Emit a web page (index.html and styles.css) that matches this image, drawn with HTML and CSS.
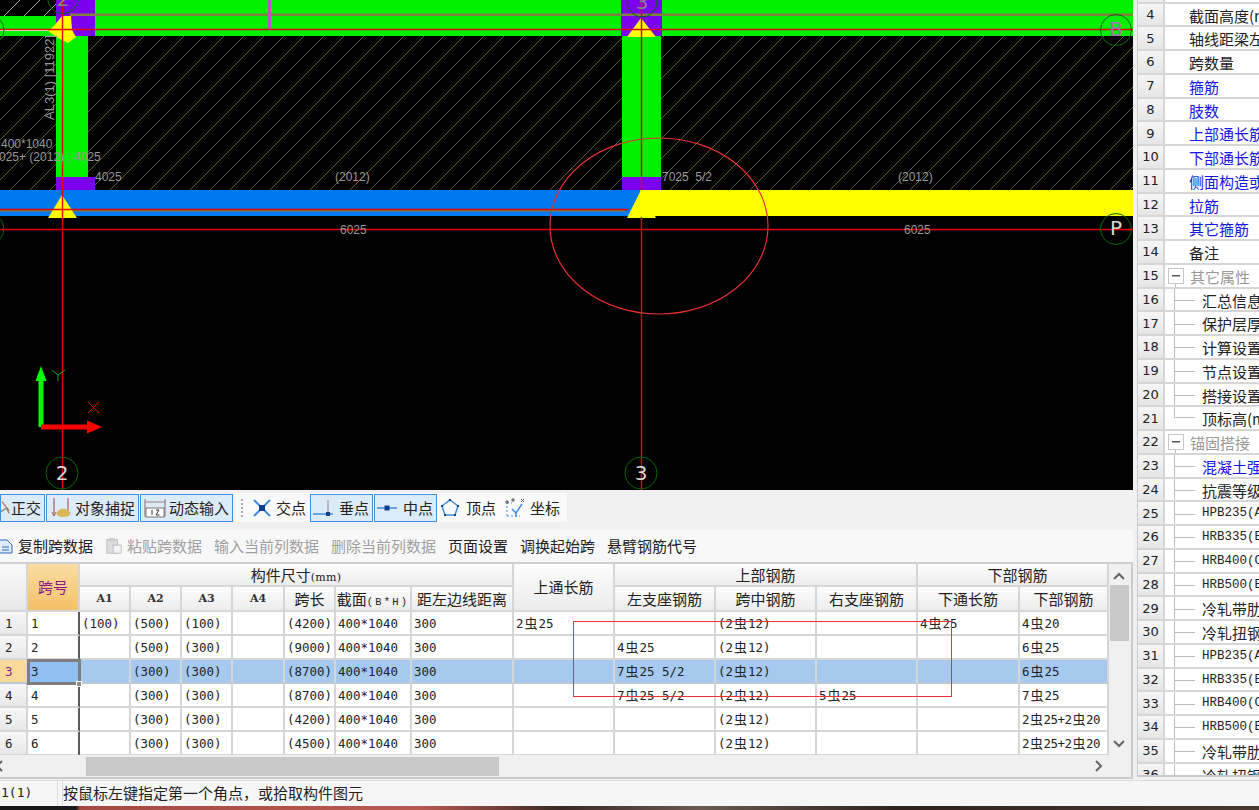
FILE: index.html
```html
<!DOCTYPE html>
<html lang="zh">
<head>
<meta charset="utf-8">
<title>梁平法表格</title>
<link rel="stylesheet" href="styles.css">
</head>
<body>
<div class="workspace">
  <div class="left">
    <div class="canvas">
      <svg class="drawing" width="1133" height="490" viewBox="0 0 1133 490">
        <defs>
          <pattern id="hatch" width="20" height="20" patternUnits="userSpaceOnUse"><path d="M-2 22L22 -2" stroke="#5c5c2c" stroke-width="1"/></pattern>
          <pattern id="hatchw" width="20" height="20" patternUnits="userSpaceOnUse"><path d="M-2 22L22 -2" stroke="#a8a8a8" stroke-width="1"/></pattern>
        </defs>
        <rect width="1133" height="490" fill="#000"/>
        <rect y="36" width="1133" height="154" fill="url(#hatch)"/>
        <rect width="56" height="16" fill="url(#hatchw)"/>
        <rect x="95" width="527" height="36" fill="#00f000"/>
        <rect x="660" width="473" height="36" fill="#00f000"/>
        <rect y="16" width="56" height="20" fill="#00f000"/>
        <rect x="56" y="36" width="32" height="141" fill="#00f000"/>
        <rect x="622" y="36" width="39" height="141" fill="#00f000"/>
        <rect x="56" width="39" height="36" fill="#7a00ee"/>
        <rect x="621" width="41" height="36" fill="#7a00ee"/>
        <rect x="56" y="177" width="39" height="13" fill="#7a00ee"/>
        <rect x="622" y="177" width="39" height="13" fill="#7a00ee"/>
        <rect y="190" width="640" height="26" fill="#0078f0"/>
        <rect x="640" y="190" width="493" height="26" fill="#ffff00"/>
        <rect x="70" y="13.5" width="1063" height="2.5" fill="#808040"/>
        <rect x="268" width="3" height="29" fill="#c050c0"/>
        <rect y="210" width="625" height="1.5" fill="#808040"/>
        <path d="M62 16L71 16L72 30L76 37L68 43L58 38L48 31L54 26Z" fill="#ffff00"/>
        <path d="M641 18L656 37L627 37Z" fill="#ffff00"/>
        <path d="M62 195L77 218L48 218Z" fill="#ffff00"/>
        <path d="M641 190L656 218L627 218Z" fill="#ffff00"/>
        <rect y="30" width="48" height="1" fill="#fff"/>
        <path d="M0 29.5H1133M0 229.5H1133M0 209.5H628M62.5 0V490M641.5 0V190M641.5 217V490" stroke="#e80000" stroke-width="1.4" fill="none"/>
        <ellipse cx="659" cy="226" rx="109" ry="88" fill="none" stroke="#e83030" stroke-width="1.2"/>
        <g fill="none" stroke="#006800">
          <circle cx="62" cy="473" r="16"/><circle cx="641" cy="473" r="16"/>
          <circle cx="1116" cy="30" r="15.5"/><circle cx="1116" cy="229" r="15.5"/>
          <circle cx="63" cy="-2" r="15.5"/><circle cx="642" cy="2" r="15"/>
          <circle cx="-11" cy="30" r="15"/><circle cx="-11" cy="229" r="15"/>
        </g>
        <g class="bubble">
          <text x="62" y="480">2</text><text x="641" y="480">3</text>
          <text class="bubble-b" x="1116" y="36">B</text><text x="1116" y="235">P</text>
          <text class="bubble-d" x="642" y="9">3</text><text class="bubble-d" x="63" y="6">2</text>
        </g>
        <g class="label">
          <text class="l-rot" transform="translate(54 120) rotate(-90)">AL3(1) [11922]</text>
          <text x="1" y="148">400*1040</text>
          <text x="-1" y="161">025+ (2012) ; 4025</text>
          <text x="95" y="181">4025</text>
          <text x="335" y="181">(2012)</text>
          <text x="340" y="234">6025</text>
          <text x="662" y="181">7025  5/2</text>
          <text x="898" y="181">(2012)</text>
          <text x="904" y="234">6025</text>
        </g>
        <path d="M41 427V378" stroke="#00ff00" stroke-width="5"/>
        <path d="M41 366L46.500 381H35.500Z" fill="#00ff00"/>
        <path d="M41 427H88" stroke="#ff0000" stroke-width="5"/>
        <path d="M102 427L87 420.500V433.500Z" fill="#ff0000"/>
        <path d="M52 370L58 375L65 370M58 375V381" stroke="#00b000" fill="none"/>
        <path d="M88 402L99 413M99 402L88 413" stroke="#d00000" fill="none"/>
      </svg>
    </div>

    <div class="snapbar">
      <div class="snap-btn on first">
        <svg width="11" height="18" viewBox="0 0 11 18"><path d="M1 2L9 12" stroke="#c87070" stroke-width="1.500"/><path d="M0 13L6 9L9 15" stroke="#888" stroke-width="1.500" fill="none"/></svg>
        <span>正交</span>
      </div>
      <div class="snap-btn on">
        <svg width="22" height="24" viewBox="0 0 22 24"><path d="M4 2V20M18 2V20" stroke="#b06060" stroke-width="1.200"/><path d="M2 16L4 20L6 16M16 16L18 20L20 16" stroke="#b06060" fill="none"/><path d="M8 15C11 11 19 13 20 17C20 21 12 22 8 20C6 18 6 17 8 15Z" fill="#d9b656"/></svg>
        <span>对象捕捉</span>
      </div>
      <div class="snap-btn on">
        <svg width="22" height="22" viewBox="0 0 22 22"><path d="M1 2V19H21V2M1 5H21" stroke="#a08080" stroke-width="1.200" fill="none"/><rect x="2" y="11" width="18" height="9" fill="#fff" stroke="#777"/><path d="M8 13V18M12 13H15L12 18H15.500" stroke="#333" fill="none"/></svg>
        <span>动态输入</span>
      </div>
      <div class="snap-group">
        <i class="grip"></i>
        <div class="snap-btn cross">
          <svg width="20" height="20" viewBox="0 0 20 20"><path d="M2 2L18 18M18 2L2 18" stroke="#3f8de0" stroke-width="2"/><rect x="7" y="7" width="6" height="6" fill="#123f8c"/></svg>
          <span>交点</span>
        </div>
        <div class="snap-btn on tight">
          <svg width="20" height="20" viewBox="0 0 20 20"><path d="M0 16H20" stroke="#3f8de0" stroke-width="1.500"/><path d="M15 2V16" stroke="#888"/><rect x="13" y="14" width="4" height="4" fill="#123f8c"/></svg>
          <span>垂点</span>
        </div>
        <div class="snap-btn on tight">
          <svg width="20" height="20" viewBox="0 0 20 20"><path d="M0 10H20" stroke="#3f8de0" stroke-width="1.500"/><rect x="7.500" y="7.500" width="5" height="5" fill="#123f8c"/></svg>
          <span>中点</span>
        </div>
        <div class="snap-btn vertex">
          <svg width="20" height="20" viewBox="0 0 20 20"><path d="M10 2L18 8L15 17H5L2 8Z" fill="none" stroke="#3f8de0" stroke-width="1.500"/><path d="M9 1h2v2H9zM1 7h2v2H1zM17 7h2v2h-2zM4 16h2v2H4zM14 16h2v2h-2z" fill="#123f8c"/></svg>
          <span>顶点</span>
        </div>
        <div class="snap-btn coord">
          <svg width="22" height="22" viewBox="0 0 22 22"><path d="M3 19V6M3 6H8M3 19H16" stroke="#3f8de0" stroke-dasharray="2 2" fill="none"/><path d="M8 12L12 16L18 7M12 16V20" stroke="#3f8de0" stroke-width="1.500" fill="none"/><path d="M2 4h2v2H2zM8 2h2v2H8zM17 2l3 3M20 2l-3 3" stroke="#555" fill="none"/></svg>
          <span>坐标</span>
        </div>
      </div>
    </div>

    <div class="datatools">
      <div class="tool first">
        <svg width="14" height="18" viewBox="0 0 14 18"><path d="M0 3H8L13 8V16H0Z" fill="#dfeafa" stroke="#2f6fb8"/><path d="M3 10H10M3 13H10" stroke="#2f6fb8"/></svg>
        <span>复制跨数据</span>
      </div>
      <div class="tool off paste">
        <svg width="18" height="18" viewBox="0 0 20 20"><rect x="2" y="3" width="12" height="15" fill="#ddd" stroke="#bbb"/><rect x="5" y="1" width="6" height="4" fill="#ccc"/><rect x="9" y="9" width="9" height="9" fill="#f4f4f4" stroke="#bbb"/></svg>
        <span>粘贴跨数据</span>
      </div>
      <div class="tool off">输入当前列数据</div>
      <div class="tool off">删除当前列数据</div>
      <div class="tool">页面设置</div>
      <div class="tool">调换起始跨</div>
      <div class="tool">悬臂钢筋代号</div>
    </div>

    <div class="gridpane">
      <div class="gridrow">
        <div class="gridclip">
          <table class="grid">
            <colgroup>
              <col class="c28"><col class="c52"><col class="c51"><col class="c51"><col class="c51"><col class="c52"><col class="c51"><col class="c76"><col class="c102"><col class="c101"><col class="c101"><col class="c101"><col class="c101"><col class="c102"><col class="c89">
            </colgroup>
            <thead>
              <tr>
                <th class="rh" rowspan="2"></th>
                <th class="span-h" rowspan="2">跨号</th>
                <th colspan="7">构件尺寸<span class="mm">(mm)</span></th>
                <th rowspan="2">上通长筋</th>
                <th colspan="3">上部钢筋</th>
                <th class="lower" colspan="2">下部钢筋</th>
              </tr>
              <tr>
                <th class="an">A1</th><th class="an">A2</th><th class="an">A3</th><th class="an">A4</th>
                <th>跨长</th><th>截面<span class="bh">(B*H)</span></th><th>距左边线距离</th>
                <th>左支座钢筋</th><th>跨中钢筋</th><th>右支座钢筋</th><th>下通长筋</th><th>下部钢筋</th>
              </tr>
            </thead>
            <tbody>
              <tr><td class="rh">1</td><td class="sn">1</td><td>(100)</td><td>(500)</td><td>(100)</td><td></td><td>(4200)</td><td>400*1040</td><td>300</td><td>2<b>虫</b>25</td><td></td><td>(2<b>虫</b>12)</td><td></td><td>4<b>虫</b>25</td><td>4<b>虫</b>20</td></tr>
              <tr><td class="rh">2</td><td class="sn">2</td><td></td><td>(500)</td><td>(300)</td><td></td><td>(9000)</td><td>400*1040</td><td>300</td><td></td><td>4<b>虫</b>25</td><td>(2<b>虫</b>12)</td><td></td><td></td><td>6<b>虫</b>25</td></tr>
              <tr class="sel"><td class="rh">3</td><td class="sn cur">3</td><td></td><td>(300)</td><td>(300)</td><td></td><td>(8700)</td><td>400*1040</td><td>300</td><td></td><td>7<b>虫</b>25 5/2</td><td>(2<b>虫</b>12)</td><td></td><td></td><td>6<b>虫</b>25</td></tr>
              <tr><td class="rh">4</td><td class="sn">4</td><td></td><td>(300)</td><td>(300)</td><td></td><td>(8700)</td><td>400*1040</td><td>300</td><td></td><td>7<b>虫</b>25 5/2</td><td>(2<b>虫</b>12)</td><td>5<b>虫</b>25</td><td></td><td>7<b>虫</b>25</td></tr>
              <tr><td class="rh">5</td><td class="sn">5</td><td></td><td>(300)</td><td>(300)</td><td></td><td>(4200)</td><td>400*1040</td><td>300</td><td></td><td></td><td>(2<b>虫</b>12)</td><td></td><td></td><td class="dense">2<b>虫</b>25+2<b>虫</b>20</td></tr>
              <tr><td class="rh">6</td><td class="sn">6</td><td></td><td>(300)</td><td>(300)</td><td></td><td>(4500)</td><td>400*1040</td><td>300</td><td></td><td></td><td>(2<b>虫</b>12)</td><td></td><td></td><td class="dense">2<b>虫</b>25+2<b>虫</b>20</td></tr>
            </tbody>
          </table>
        </div>
        <div class="vscroll">
          <svg width="12" height="8" viewBox="0 0 12 8"><path d="M1 7L6 2L11 7" stroke="#666" stroke-width="2" fill="none"/></svg>
          <div class="vthumb"></div>
          <svg class="vdown" width="12" height="8" viewBox="0 0 12 8"><path d="M1 1L6 6L11 1" stroke="#666" stroke-width="2" fill="none"/></svg>
        </div>
      </div>
      <div class="hscroll">
        <svg class="hleft" width="6" height="12" viewBox="0 0 6 12"><path d="M5 1L0 6L5 11" stroke="#666" stroke-width="2" fill="none"/></svg>
        <div class="hthumb"></div>
        <svg class="hright" width="8" height="12" viewBox="0 0 8 12"><path d="M1 1L6 6L1 11" stroke="#666" stroke-width="2" fill="none"/></svg>
      </div>
      <div class="markup"></div>
      <i class="handle"></i>
    </div>
  </div>

  <div class="props">
    <div class="ptop"><span class="rn"></span></div>
    <div class="prow"><span class="rn">4</span><span class="pname">截面高度(mm)</span></div>
    <div class="prow"><span class="rn">5</span><span class="pname">轴线距梁左</span></div>
    <div class="prow"><span class="rn">6</span><span class="pname">跨数量</span></div>
    <div class="prow"><span class="rn">7</span><span class="pname link">箍筋</span></div>
    <div class="prow"><span class="rn">8</span><span class="pname link">肢数</span></div>
    <div class="prow"><span class="rn">9</span><span class="pname link">上部通长筋</span></div>
    <div class="prow"><span class="rn">10</span><span class="pname link">下部通长筋</span></div>
    <div class="prow"><span class="rn">11</span><span class="pname link">侧面构造或</span></div>
    <div class="prow"><span class="rn">12</span><span class="pname link">拉筋</span></div>
    <div class="prow"><span class="rn">13</span><span class="pname link">其它箍筋</span></div>
    <div class="prow"><span class="rn">14</span><span class="pname">备注</span></div>
    <div class="prow"><span class="rn">15</span><span class="fold"></span><span class="gname">其它属性</span></div>
    <div class="prow"><span class="rn">16</span><i class="guide"></i><span class="cname">汇总信息</span></div>
    <div class="prow"><span class="rn">17</span><i class="guide"></i><span class="cname">保护层厚</span></div>
    <div class="prow"><span class="rn">18</span><i class="guide"></i><span class="cname">计算设置</span></div>
    <div class="prow"><span class="rn">19</span><i class="guide"></i><span class="cname">节点设置</span></div>
    <div class="prow"><span class="rn">20</span><i class="guide"></i><span class="cname">搭接设置</span></div>
    <div class="prow"><span class="rn">21</span><i class="guide last"></i><span class="cname">顶标高(m</span></div>
    <div class="prow"><span class="rn">22</span><span class="fold"></span><span class="gname">锚固搭接</span></div>
    <div class="prow"><span class="rn">23</span><i class="guide"></i><span class="cname link">混凝土强</span></div>
    <div class="prow"><span class="rn">24</span><i class="guide"></i><span class="cname">抗震等级</span></div>
    <div class="prow"><span class="rn">25</span><i class="guide"></i><span class="cname lat">HPB235(A</span></div>
    <div class="prow"><span class="rn">26</span><i class="guide"></i><span class="cname lat">HRB335(B</span></div>
    <div class="prow"><span class="rn">27</span><i class="guide"></i><span class="cname lat">HRB400(C</span></div>
    <div class="prow"><span class="rn">28</span><i class="guide"></i><span class="cname lat">HRB500(E</span></div>
    <div class="prow"><span class="rn">29</span><i class="guide"></i><span class="cname">冷轧带肋</span></div>
    <div class="prow"><span class="rn">30</span><i class="guide"></i><span class="cname">冷轧扭钢</span></div>
    <div class="prow"><span class="rn">31</span><i class="guide"></i><span class="cname lat">HPB235(A</span></div>
    <div class="prow"><span class="rn">32</span><i class="guide"></i><span class="cname lat">HRB335(B</span></div>
    <div class="prow"><span class="rn">33</span><i class="guide"></i><span class="cname lat">HRB400(C</span></div>
    <div class="prow"><span class="rn">34</span><i class="guide"></i><span class="cname lat">HRB500(E</span></div>
    <div class="prow"><span class="rn">35</span><i class="guide"></i><span class="cname">冷轧带肋</span></div>
    <div class="prow"><span class="rn">36</span><i class="guide"></i><span class="cname">冷轧扭钢</span></div>
  </div>
</div>

<div class="status">
  <div class="st-a">1(1)</div>
  <div class="st-b">按鼠标左键指定第一个角点，或拾取构件图元</div>
</div>
<div class="strip"></div>
</body>
</html>
```
FILE: styles.css
```css
* { box-sizing: border-box; }
html, body { margin: 0; padding: 0; }
body {
  width: 1259px;
  height: 810px;
  overflow: hidden;
  background: #f0f0f0;
  color: #222;
  font: 15px/1.2 "Noto Sans CJK SC", sans-serif;
}
.workspace { display: flex; height: 780px; }
.left { width: 1133px; display: flex; flex-direction: column; flex: none; padding-bottom: 1px; }

/* drawing */
.canvas { height: 490px; background: #000; overflow: hidden; flex: none; }
.drawing { display: block; }
.bubble text { font: 20px "DejaVu Sans", sans-serif; fill: #d8d8d8; text-anchor: middle; }
.bubble .bubble-b { fill: #a070b0; }
.bubble .bubble-d { fill: #888; }
.label text { font: 12px "Liberation Sans", sans-serif; fill: #989898; white-space: pre; }
.label .l-rot { font-size: 13px; }

/* snap toolbar */
.snapbar {
  height: 40px;
  flex: none;
  display: flex;
  align-items: flex-start;
  padding-top: 4px;
  background: #f0f0f0;
}
.snap-btn {
  height: 28px;
  display: flex;
  align-items: center;
  gap: 4px;
  padding: 0 3px;
  white-space: nowrap;
  color: #222;
}
.snap-btn.on { border: 1px solid #3d93de; background: #dcebf8; margin-right: 1px; gap: 3px; }
.snap-btn.first { width: 45px; padding-left: 0; margin-right: 1px; gap: 0; }
.snap-btn.tight { width: 63px; gap: 6px; padding: 0 2px; }
.snap-group {
  height: 29px;
  margin-top: -1px;
  margin-left: 1px;
  width: 332px;
  display: flex;
  align-items: center;
  background: #f9f9f9;
  padding-left: 6px;
}
.grip { width: 2px; height: 18px; margin-right: 6px; background: repeating-linear-gradient(#aaa 0 2px, transparent 2px 4px); }
.snap-group .snap-btn { margin-right: 0; }
.snap-group .snap-btn.on + .snap-btn.on { margin-left: 1px; }
.snap-group .cross { margin-right: 1px; }
.snap-group .vertex { gap: 6px; }
.snap-group .coord { margin-left: 2px; }

/* data toolbar */
.datatools {
  height: 32px;
  flex: none;
  display: flex;
  align-items: center;
  gap: 12px;
  background: #f8f8f8;
  color: #222;
}
.tool { display: flex; align-items: center; gap: 5px; white-space: nowrap; }
.tool.first { margin-left: -1px; }
.tool.paste { gap: 4px; }
.tool.off { color: #a0a0a0; }

/* grid */
.gridpane {
  position: relative;
  flex: 1;
  display: flex;
  flex-direction: column;
  border-top: 2px solid #cfcfcf;
  border-right: 2px solid #c8ccd0;
  border-bottom: 2px solid #c8ccd0;
  background: #f0f0f0;
}
.gridrow { display: flex; height: 191px; flex: none; }
.gridclip { width: 1109px; overflow: hidden; flex: none; background: #f0f0f0; }
.grid { width: 1109px; table-layout: fixed; border-collapse: separate; border-spacing: 0; }
.c28 { width: 28px; } .c52 { width: 52px; } .c51 { width: 51px; } .c76 { width: 76px; }
.c102 { width: 102px; } .c101 { width: 101px; } .c89 { width: 89px; }
.grid th, .grid td {
  padding: 0;
  border-right: 2px solid #d6d6d6;
  border-bottom: 2px solid #d6d6d6;
  overflow: hidden;
  white-space: nowrap;
}
.grid th {
  height: 24px;
  font-weight: 400;
  font-size: 15px;
  line-height: 20px;
  color: #222;
  text-align: center;
  background: linear-gradient(#fdfdfd, #ececec);
}
.grid thead tr:first-child th { height: 23px; }
.grid thead tr:nth-child(2) th { height: 25px; }
.grid th.rh { background: linear-gradient(#fafafa, #e8e8e8); }
.grid th.span-h { background: linear-gradient(#fbdda2, #f2c168); color: #8a1a8a; }
.grid th.lower { padding-left: 10px; }
.grid .mm { font: 11px "DejaVu Serif", serif; letter-spacing: 0.300px; }
.grid .bh { font: 10.500px "Liberation Mono", monospace; letter-spacing: 2.200px; }
.grid .an { font: 700 11px "DejaVu Serif", serif; color: #333; }
.grid td {
  height: 23.750px;
  padding: 1px 0 0 2px;
  background: #fff;
  font: 12.460px/20px "DejaVu Sans Mono", "Noto Sans CJK SC", monospace;
  color: #222;
}
.grid td b { font: 400 13px/20px "Noto Sans CJK SC", sans-serif; margin: 0 1px; }
.grid td.dense { letter-spacing: -0.500px; }
.grid td.rh { padding-left: 5px; background: linear-gradient(#f8f8f8, #e8e8e8); }
.grid td.sn { padding-left: 3px; border-right-color: #5c5c5c; }
.grid .sel td { background: #a5c9ef; border-bottom-color: #bcc8d4; }
.grid .sel td.rh { background: #f8d99a; color: #8a1a8a; }
.grid .sel td.cur { background: #90c0f2; outline: 3px solid #7f7f7f; outline-offset: -2px; padding-left: 3px; }

.vscroll { width: 20px; flex: none; display: flex; flex-direction: column; align-items: center; padding-top: 8px; background: #f0f0f0; }
.vthumb { width: 19px; height: 56px; margin-top: 5px; background: #c8c8c8; }
.vdown { margin-top: auto; margin-bottom: 7px; }
.hscroll { flex: 1; display: flex; align-items: center; background: #f0f0f0; padding-right: 28px; }
.hleft { margin-left: -3px; }
.hthumb { margin-left: 83px; width: 413px; height: 19px; background: #c8c8c8; }
.hright { margin-left: auto; }

.markup {
  position: absolute;
  left: 573px;
  top: 57px;
  width: 379px;
  height: 76px;
  border: 1px solid #ee3030;
}
.handle { position: absolute; left: 76px; top: 117px; width: 6px; height: 6px; background: #8c8c8c; border: 1px solid #fff; }

/* properties */
.props {
  flex: 1;
  margin: 0 0 3px 4px;
  border-left: 1px solid #c8ccd0;
  border-bottom: 2px solid #c8ccd0;
  background: #fff;
  overflow: hidden;
}
.ptop { height: 3.500px; display: flex; border-bottom: 2px solid #d6d6d6; }
.ptop .rn { background: #eee; }
.prow {
  height: 23.750px;
  display: flex;
  align-items: stretch;
  border-bottom: 2px solid #d6d6d6;
  white-space: nowrap;
  overflow: hidden;
}
.rn {
  width: 27px;
  flex: none;
  display: flex;
  align-items: center;
  justify-content: center;
  font: 13px "DejaVu Sans", sans-serif;
  color: #222;
  background: linear-gradient(#f6f6f6, #e6e6e6);
  border-right: 2px solid #d6d6d6;
}
.pname { padding-left: 24px; line-height: 23px; }
.link { color: #1414e6; }
.fold {
  position: relative;
  flex: none;
  width: 16px;
  height: 16px;
  align-self: center;
  margin-left: 3px;
  border: 1px solid #c8c8c8;
  background: linear-gradient(#555, #555) no-repeat center / 8px 1.500px;
}
.fold::after {
  content: "";
  position: absolute;
  left: 6px;
  top: 15px;
  width: 1px;
  height: 6px;
  background: #bbb;
}
.gname { padding-left: 6px; line-height: 23px; color: #999; }
.guide {
  flex: none;
  width: 21px;
  margin-left: 9px;
  margin-bottom: -2px;
  border-left: 1px solid #bdbdbd;
  background: linear-gradient(#bdbdbd, #bdbdbd) no-repeat center / 100% 1px;
}
.guide.last { margin-bottom: 0; height: 11px; border-left: 1px solid #bdbdbd; border-bottom: 1px solid #bdbdbd; background: none; }
.cname { padding-left: 7px; line-height: 23px; }
.cname.lat { font: 12.500px/22px "Liberation Mono", monospace; color: #222; }

/* status */
.status { height: 26px; display: flex; gap: 4px; background: #f6f6f6; border-top: 1px solid #dcdcdc; }
.st-a { width: 58px; padding-left: 1px; font: 13px/24px "DejaVu Sans Mono", monospace; border-right: 1px solid #dcdcdc; }
.st-b { flex: 1; line-height: 24px; border-left: 1px solid #dcdcdc; }
.strip {
  height: 4px;
  background: linear-gradient(90deg, #1a1a1a 0 76px, #a34a40 80px, #b85a50 420px, #3a2a22 560px, #6a5a50 700px, #2e2218 900px, #4a3a30 1259px);
}
```
